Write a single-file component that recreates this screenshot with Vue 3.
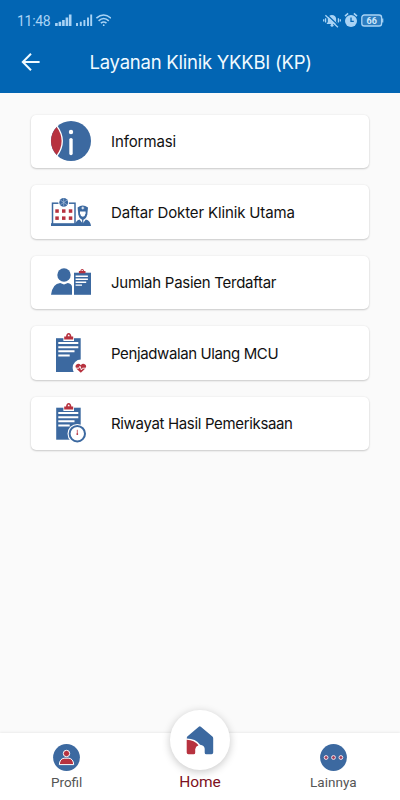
<template>
  <div class="screen">
    <header class="app-bar">
      <div class="status-bar">
        <span class="clock">11:48</span>
        <svg class="signals" width="56" height="14" viewBox="0 0 56 14">
          <path
            class="signal"
            d="M1.4 13v-3M4.9 13v-4.2M8.4 13V7M11.9 13V4.5M15.2 13V1.5"
          />
          <path
            class="signal thin"
            d="M22 13v-3M25.8 13v-4.2M29.4 13V7M33 13V4.5M36.2 13V1.5"
          />
          <g class="wifi">
            <path d="M41.4 5.2Q48.7-1.2 56 5.2" />
            <path d="M43.6 7.8Q48.7 3.2 53.8 7.8" />
            <path d="M45.9 10.2Q48.7 7.8 51.5 10.2" />
            <circle cx="48.7" cy="12.2" r="0.9" />
          </g>
        </svg>
        <svg class="status-right" width="62" height="16" viewBox="0 0 62 16">
          <g class="bell">
            <path d="M3.5 12h11l-1.4-2V6.5a4.2 4.2 0 0 0-8.3 0V10z" />
            <circle cx="9" cy="13.2" r="1.5" />
            <path class="wave" d="M2.6 6.2v4.4M.7 7.3v2.2M15.4 6.2v4.4M17.3 7.3v2.2" />
            <path class="slash-gap" d="M3.6 2.2l12 11.6" />
            <path class="slash" d="M2.4 3.2l12.5 12" />
          </g>
          <g class="alarm">
            <circle cx="28" cy="9" r="6" />
            <path class="ears" d="M22 4.1l3.1-2.7M34 4.1l-3.1-2.7" />
            <path class="hands" d="M28 5.5V9.4h2.8" />
          </g>
          <rect class="battery" x="38.8" y="3" width="19.8" height="11" rx="2.6" />
          <path class="battery-tip" d="M59.7 6.4v4.2" />
          <text x="48.7" y="11.7" class="battery-text">66</text>
        </svg>
      </div>
      <div class="title-row">
        <button class="back" aria-label="Kembali">
          <svg width="20" height="20" viewBox="0 0 20 20">
            <path d="M18.6 10H2M10 1.8L1.8 10l8.2 8.2" />
          </svg>
        </button>
        <h1>Layanan Klinik YKKBI (KP)</h1>
      </div>
    </header>

    <main class="menu">
      <button v-for="item in menu" :key="item.icon" class="card">
        <svg class="card-icon" viewBox="0 0 40 40" width="40" height="40">
          <g v-if="item.icon === 'info'">
            <circle class="blue" cx="20" cy="20" r="20" />
            <path class="red" d="M6 5.7A20 20 0 0 0 6 34.3Q16.5 20 6 5.7z" />
            <path class="line" d="M5.6 4.6Q17 20 5.6 35.4" />
            <circle class="white" cx="20" cy="11" r="2.2" />
            <path class="stem" d="M20 18.6v14" />
          </g>

          <g v-else-if="item.icon === 'doctor'">
            <rect class="outline" x="1.5" y="11.2" width="22.5" height="22" />
            <path class="blue" d="M0 31.2h27V34H0z" />
            <circle class="white" cx="12.7" cy="10.4" r="5.4" />
            <circle class="emblem" cx="12.7" cy="10.4" r="4.4" />
            <path class="emblem-cut" d="M9.3 8l6.8 4.8M9.3 12.8L16.1 8M12.7 6.3v8.2" />
            <template v-for="y in [17.3, 24.4]" :key="y">
              <rect
                v-for="x in [4.3, 11, 17.8]"
                :key="x"
                class="red"
                :x="x"
                :y="y"
                width="3.5"
                height="3.5"
              />
            </template>
            <path class="white" d="M25 20h14v12H25z" />
            <path class="blue" d="M24 34q.2-5.4 4.6-6.6l3.1 4.2 3.1-4.2Q39.6 28.6 40 34z" />
            <path class="blue" d="M26.6 15.6q5-4.2 10.4 0l-.7 7q-1.2 4.8-4.5 5.3-3.3-.5-4.5-5.3z" />
            <path class="face" d="M29 19.6h5.6v1.6q-.3 3-2.8 3.5-2.5-.5-2.8-3.5z" />
            <path class="cross" d="M31.8 14.6v2.8M30.4 16h2.8" />
            <path class="blue" d="M31.1 27h1.2v7h-1.2z" />
          </g>

          <g v-else-if="item.icon === 'patients'">
            <circle class="blue" cx="13" cy="13" r="6.7" />
            <path class="blue" d="M0 32.8Q1.5 21.6 9.2 21l3.8 1.4 3.8-1.4q3.8.4 4.2 3.8v8z" />
            <path class="blue" d="M23 10.7h17v22.1H23z" />
            <path
              class="red clip"
              d="M27.9 11.3V9.1h1.4Q29.6 6.9 31.2 6.9t1.9 2.2h1.4v2.2zM30.4 9h1.6q0-1-.8-1t-.8 1z"
            />
            <path class="line thin" d="M24.6 14.3h12.3M24.6 17.3h12.3M24.6 20.2h10.6M24.6 23.1H31" />
          </g>

          <g v-else>
            <path
              class="blue"
              :d="item.icon === 'schedule' ? 'M5 5.2h24.7V39H5z' : 'M5.2 4.7h24.5v32H5.2z'"
            />
            <path
              class="white"
              d="M12.4 7.9V3.4h2.7Q15.5-.3 17.7-.3t2.6 3.7H23v4.5z"
            />
            <path
              class="red clip"
              d="M13.2 6.6V3.5h1.8Q15.4 0 17.7 0t2.7 3.5h1.8v3.1zM16.7 3.2h2q-.1-1.6-1-1.6t-1 1.6z"
            />
            <path class="line notes" d="M7.3 10h20M7.3 14.2h20M7.3 18.3h16.2M7.3 22.5h11.4" />
            <template v-if="item.icon === 'schedule'">
              <circle class="white" cx="30" cy="35" r="8.4" />
              <path
                class="red"
                d="M29.8 39.8l-4.3-4.1q-2-2.7 0-4.3 2.5-1.4 4.3.8 1.9-2.2 4.3-.8 2.1 1.6 0 4.3z"
              />
              <path class="pulse" d="M24 35.2h3.8l1.2-2 1.4 3.8 1.1-1.8h4" />
            </template>
            <template v-else>
              <circle class="white" cx="26.3" cy="30.7" r="9.8" />
              <circle class="dial" cx="26.3" cy="30.7" r="7.7" />
              <path class="tick" d="M26.3 26.8v4.8" />
              <circle class="red" cx="26.3" cy="31.1" r="0.9" />
            </template>
          </g>
        </svg>
        <span class="label" :style="{ letterSpacing: item.spacing + 'px' }">{{ item.label }}</span>
      </button>
    </main>

    <nav class="tabs">
      <a class="tab">
        <svg width="27" height="27" viewBox="0 0 27 27">
          <circle class="blue" cx="13.5" cy="13.5" r="13.4" />
          <path class="person" d="M6.3 20.6q.4-5.8 4.8-6.4h4.8q4.4.6 4.8 6.4z" />
          <circle class="person" cx="13.5" cy="9.5" r="3.2" />
        </svg>
        <span>Profil</span>
      </a>
      <a class="tab active">
        <div class="bubble">
          <svg width="28" height="29" viewBox="0 0 28 29">
            <path
              class="blue"
              d="M1.3 10.6L12.8.7q1-.8 2 0l11.6 9.9q.8.7.8 1.8v14.2q0 1.7-1.7 1.7h-5.2q-1.6 0-1.6-1.6v-3.9q-.3-3.6-4.6-4Q9.6 12.6.8 12.5q-.1-1.2.5-1.9z"
            />
            <path
              class="red"
              d="M.7 13.7q7.8.3 11.8 5.5-3 1-3.3 4v3.5q0 1.6-1.6 1.6H2.4q-1.7 0-1.7-1.7z"
            />
          </svg>
        </div>
        <span>Home</span>
      </a>
      <a class="tab">
        <svg width="27" height="27" viewBox="0 0 27 27">
          <circle class="blue" cx="13.5" cy="13.5" r="13.4" />
          <circle v-for="x in [6.1, 13.5, 20.9]" :key="x" class="dot" :cx="x" cy="13.5" r="1.9" />
        </svg>
        <span>Lainnya</span>
      </a>
    </nav>
  </div>
</template>

<script setup>
const menu = [
  { icon: 'info', label: 'Informasi', spacing: -0.1 },
  { icon: 'doctor', label: 'Daftar Dokter Klinik Utama', spacing: -0.14 },
  { icon: 'patients', label: 'Jumlah Pasien Terdaftar', spacing: -0.27 },
  { icon: 'schedule', label: 'Penjadwalan Ulang MCU', spacing: -0.39 },
  { icon: 'history', label: 'Riwayat Hasil Pemeriksaan', spacing: -0.34 },
];
</script>

<style>
body {
  margin: 0;
  background: #fafafa;
}
</style>

<style scoped>
.screen {
  display: flex;
  flex-direction: column;
  width: 400px;
  height: 800px;
  overflow: hidden;
  background: #fafafa;
  font-family: Inter, 'Liberation Sans', sans-serif;
}

button {
  border: 0;
  padding: 0;
  background: none;
  font: inherit;
  text-align: left;
}

/* header */
.app-bar {
  height: 93px;
  box-sizing: border-box;
  background: #0265b3;
  color: #f0faff;
}
.status-bar {
  display: flex;
  align-items: center;
  height: 40px;
  padding: 0 15px 0 17px;
}
.clock {
  width: 38px;
  padding-top: 2px;
  font: 14px/38px Roboto, sans-serif;
  letter-spacing: -0.3px;
  color: #a9d3f5;
}
.status-right {
  margin-left: auto;
}
.signal {
  stroke: #a9d3f5;
  stroke-width: 2.6;
}
.signal.thin {
  stroke-width: 1.9;
}
.wifi path {
  fill: none;
  stroke: #a9d3f5;
  stroke-width: 1.6;
}
.wifi circle,
.bell,
.alarm {
  fill: #a9d3f5;
}
.wave,
.slash,
.ears {
  stroke: #a9d3f5;
  stroke-width: 1.3;
}
.slash-gap {
  stroke: #0265b3;
  stroke-width: 1.2;
}
.ears {
  stroke-width: 1.6;
}
.hands {
  fill: none;
  stroke: #0265b3;
  stroke-width: 1.3;
}
.battery {
  fill: #2c7dc1;
  stroke: #a9d3f5;
  stroke-width: 1.3;
}
.battery-tip {
  stroke: #a9d3f5;
  stroke-width: 1.2;
}
.battery-text {
  font: 700 9px Roboto, sans-serif;
  text-anchor: middle;
  fill: #d0e9fb;
}
.title-row {
  display: flex;
  align-items: center;
  height: 44px;
  padding-left: 21px;
}
.back {
  display: flex;
  width: 68.5px;
}
.back path {
  fill: none;
  stroke: #f0faff;
  stroke-width: 2;
}
h1 {
  margin: 0;
  font-size: 18.5px;
  font-weight: 400;
  letter-spacing: -0.24px;
  white-space: nowrap;
}

/* menu */
.menu {
  flex: 1;
  display: flex;
  flex-direction: column;
  gap: 17px;
  padding: 21.5px 31px 0;
}
.card {
  display: flex;
  align-items: center;
  gap: 20px;
  height: 53.5px;
  padding-left: 20px;
  border-radius: 5px;
  background: #fff;
  box-shadow:
    0 1px 2px rgba(0, 0, 0, 0.18),
    0 0 2px rgba(0, 0, 0, 0.08);
}
.card-icon {
  overflow: visible;
}
.label {
  padding-top: 1px;
  font-size: 15px;
  color: #111;
  white-space: nowrap;
}

/* icons */
.blue {
  fill: #3c69a0;
}
.red {
  fill: #b7323f;
}
.clip {
  fill-rule: evenodd;
}
.white,
.face {
  fill: #fff;
}
.line {
  fill: none;
  stroke: #fff;
  stroke-width: 1.3;
}
.line.thin {
  stroke-width: 1.4;
}
.line.notes {
  stroke-width: 2.1;
}
.stem {
  stroke: #fff;
  stroke-width: 3.4;
  stroke-linecap: round;
}
.outline {
  fill: #fff;
  stroke: #3c69a0;
  stroke-width: 1.5;
}
.emblem {
  fill: #3c69a0;
}
.emblem-cut {
  stroke: #a9c0da;
  stroke-width: 0.7;
}
.cross,
.pulse {
  fill: none;
  stroke: #fff;
  stroke-width: 0.9;
}
.dial {
  fill: #fff;
  stroke: #3c69a0;
  stroke-width: 2;
}
.tick {
  stroke: #b7323f;
  stroke-width: 0.8;
}

/* bottom tabs */
.tabs {
  display: flex;
  height: 67px;
  background: #fff;
  box-shadow: 0 -1px 2px rgba(0, 0, 0, 0.06);
}
.tab {
  flex: 1;
  display: flex;
  flex-direction: column;
  align-items: center;
  padding-top: 11px;
  font: 13.5px/20px Roboto, sans-serif;
  color: #555;
}
.tab span {
  margin-top: 1px;
}
.tab.active {
  padding-top: 0;
  color: #7c1022;
  font-size: 15.5px;
}
.tab.active span {
  margin-top: 2px;
}
.bubble {
  display: flex;
  align-items: center;
  justify-content: center;
  width: 60px;
  height: 60px;
  margin-top: -23px;
  border-radius: 50%;
  background: #fff;
  box-shadow: 0 2px 8px rgba(0, 0, 0, 0.22);
}
.person {
  fill: #b7323f;
  stroke: #fff;
  stroke-width: 1;
}
.dot {
  fill: #a23d58;
  stroke: #f3e5ee;
  stroke-width: 1;
}
</style>
